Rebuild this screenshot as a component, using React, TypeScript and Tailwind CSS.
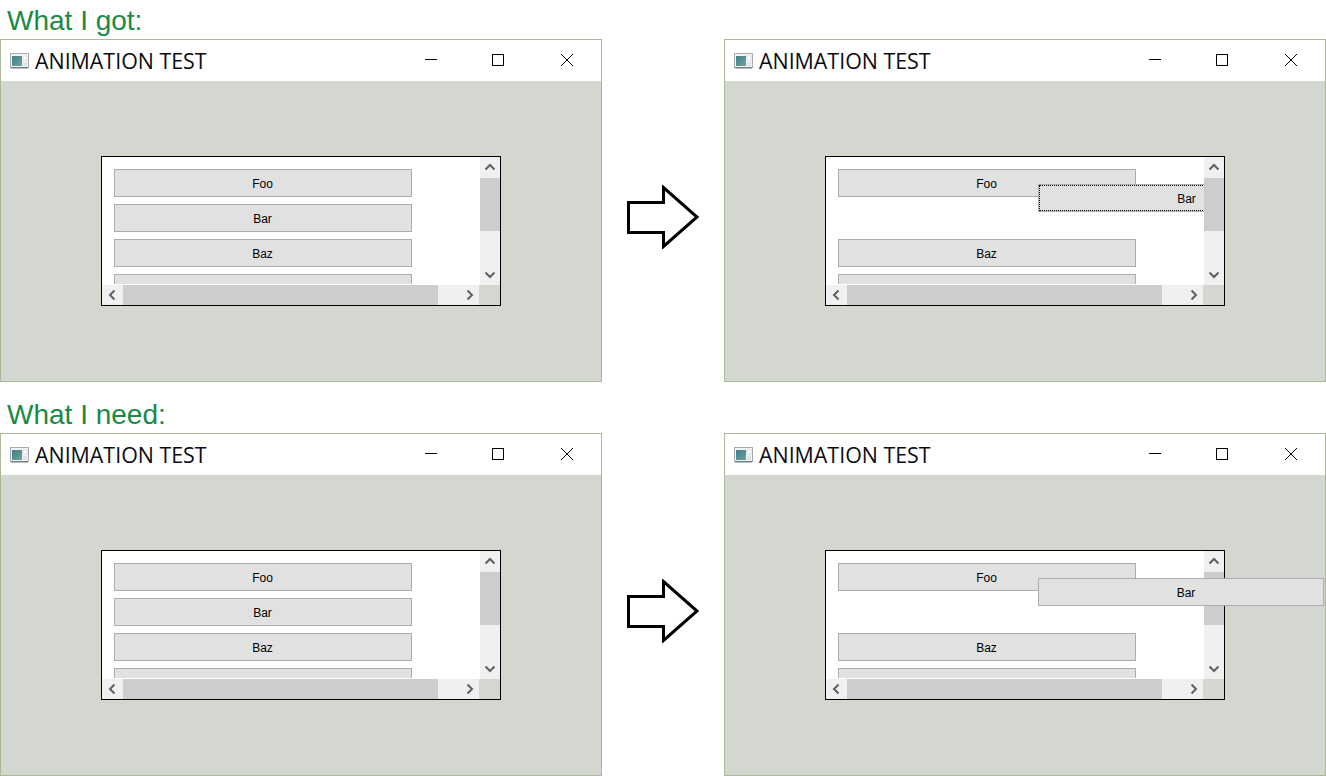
// App.tsx
const BTN_BASE =
  "h-7 shrink-0 border border-[#adadad] bg-[#e1e1e1] pt-px text-[12px] leading-[26px] text-black text-center";
const ITEM_BTN = BTN_BASE + " w-[298px] pr-px";

function AppIcon() {
  return (
    <svg width="19" height="16" viewBox="0 0 19 16" className="shrink-0">
      <defs>
        <linearGradient id="tealFill" x1="0" y1="0" x2="1" y2="1">
          <stop offset="0" stopColor="#3f7f8c" />
          <stop offset="1" stopColor="#6fa39a" />
        </linearGradient>
      </defs>
      <rect x="0.5" y="0.5" width="18" height="14" fill="#f2f3f4" stroke="#a8acb0" />
      <rect x="1" y="14" width="17" height="1.5" fill="#777c82" />
      <rect x="2" y="3" width="10" height="10" fill="url(#tealFill)" />
      <rect x="13" y="3" width="4" height="4" fill="#ffffff" stroke="#c4c8cc" strokeWidth="0.5" />
      <rect x="13" y="9" width="4" height="4" fill="#dfe3e5" />
    </svg>
  );
}

function WindowControls() {
  return (
    <>
      <svg width="14" height="14" viewBox="0 0 14 14" className="absolute left-[423px] top-[13px]">
        <path d="M1 6.5H13" stroke="#000" strokeWidth="1" fill="none" />
      </svg>
      <svg width="14" height="14" viewBox="0 0 14 14" className="absolute left-[490px] top-[13px]">
        <rect x="1.5" y="1.5" width="11" height="11" stroke="#000" strokeWidth="1" fill="none" />
      </svg>
      <svg width="14" height="14" viewBox="0 0 14 14" className="absolute left-[559px] top-[13px]">
        <path d="M1 1L13 13M13 1L1 13" stroke="#000" strokeWidth="1" fill="none" />
      </svg>
    </>
  );
}

type Dir = "up" | "down" | "left" | "right";

const CHEVRONS: Record<Dir, string> = {
  up: "M1.5 7.5L6 3L10.5 7.5",
  down: "M1.5 3.5L6 8L10.5 3.5",
  left: "M7.5 1.5L3 6L7.5 10.5",
  right: "M3.5 1.5L8 6L3.5 10.5",
};

function Chevron({ dir }: { dir: Dir }) {
  return (
    <svg width="12" height="12" viewBox="0 0 12 12">
      <path d={CHEVRONS[dir]} stroke="#606060" strokeWidth="2" fill="none" />
    </svg>
  );
}

type Mode = "idle" | "clipped" | "free";

function ScrollList({ mode }: { mode: Mode }) {
  return (
    <div className="relative h-[150px] w-[400px] border border-black bg-white">
      <div className="grid h-full w-full grid-cols-[1fr_20px] grid-rows-[128px_20px]">
        <div className="relative overflow-hidden border-b border-white">
          <div className="flex flex-col gap-[7px] pl-3 pt-3">
            <div className={ITEM_BTN}>Foo</div>
            <div className={ITEM_BTN + (mode === "idle" ? "" : " invisible")}>Bar</div>
            <div className={ITEM_BTN}>Baz</div>
            <div className={ITEM_BTN} />
          </div>
          {mode === "clipped" && (
            <div className={ITEM_BTN + " absolute left-[212px] top-[27px] outline-1 outline-dotted outline-black -outline-offset-2"}>
              Bar
            </div>
          )}
        </div>
        <div className="flex flex-col bg-[#f0f0f0]">
          <div className="flex h-[21px] items-center justify-center">
            <Chevron dir="up" />
          </div>
          <div className="h-[53px] bg-[#cdcdcd]" />
          <div className="flex-1" />
          <div className="flex h-[21px] items-center justify-center">
            <Chevron dir="down" />
          </div>
        </div>
        <div className="flex bg-[#f0f0f0]">
          <div className="flex w-[21px] items-center justify-center">
            <Chevron dir="left" />
          </div>
          <div className="w-[315px] bg-[#cdcdcd]" />
          <div className="flex-1" />
          <div className="flex w-[21px] items-center justify-center">
            <Chevron dir="right" />
          </div>
        </div>
        <div className="relative -ml-px bg-[#d4d7d0]" />
      </div>
      {mode === "free" && (
        <div className={BTN_BASE + " absolute left-[212px] top-[27px] w-[286px] pl-[10px]"}>Bar</div>
      )}
    </div>
  );
}

function TestWindow({ mode }: { mode: Mode }) {
  return (
    <div className="relative flex h-[343px] w-[602px] flex-col overflow-hidden border border-[#a9b99a] bg-white">
      <div className="flex h-[41px] shrink-0 items-center gap-[6px] pl-[9px]">
        <AppIcon />
        <span className="text-[21.4px] leading-none text-[#0b0b14] [font-family:'Open_Sans',sans-serif]">ANIMATION TEST</span>
        <WindowControls />
      </div>
      <div className="flex flex-1 items-center justify-center bg-[#d4d7d0]">
        <ScrollList mode={mode} />
      </div>
    </div>
  );
}

function Arrow() {
  return (
    <div className="mt-3 flex w-[122px] items-center justify-center">
      <svg width="74" height="64" viewBox="0 0 74 64">
        <path
          d="M2.5 17.5H37.5V2.5L71 32L37.5 61.5V47.5H2.5Z"
          fill="#fff"
          stroke="#000"
          strokeWidth="3"
        />
      </svg>
    </div>
  );
}

function Row({ title, after }: { title: string; after: Mode }) {
  return (
    <section>
      <h2 className="h-[39px] pl-[7px] text-[28px] leading-[42px] text-[#1a8a45]">{title}</h2>
      <div className="flex">
        <TestWindow mode="idle" />
        <Arrow />
        <TestWindow mode={after} />
      </div>
    </section>
  );
}

export default function App() {
  return (
    <div className="flex h-[776px] w-[1326px] flex-col gap-3 overflow-hidden bg-white [font-family:'Liberation_Sans',sans-serif]">
      <Row title="What I got:" after="clipped" />
      <Row title="What I need:" after="free" />
    </div>
  );
}
